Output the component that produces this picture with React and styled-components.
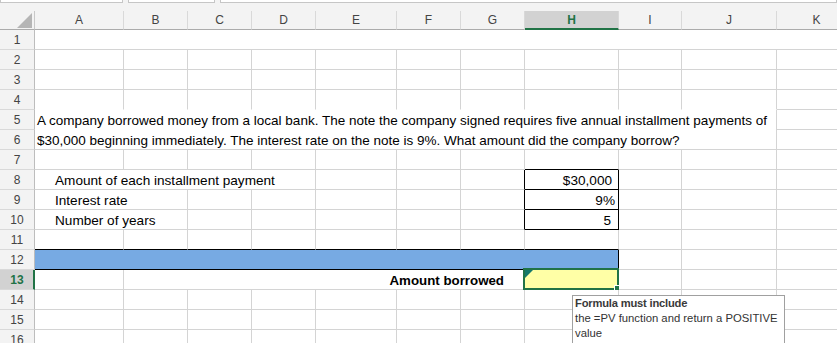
import React from "react";
import styled, { createGlobalStyle } from "styled-components";

const GRID = "#d4d4d4";
const BLACK = "#000";
const BLUE = "#77aae3";
const YELLOW = "#ffffa6";
const GREEN = "#217346";

const GlobalStyle = createGlobalStyle`
  html, body {
    margin: 0;
    padding: 0;
    background: #fff;
    overflow: hidden;
  }
  body {
    font-family: "Liberation Sans", Arial, sans-serif;
  }
`;

const COLS = [
  { name: "A", width: 89 },
  { name: "B", width: 64 },
  { name: "C", width: 64 },
  { name: "D", width: 64 },
  { name: "E", width: 81 },
  { name: "F", width: 64 },
  { name: "G", width: 64 },
  { name: "H", width: 94, active: true },
  { name: "I", width: 63 },
  { name: "J", width: 95 },
  { name: "K", width: 80 },
];

const Page = styled.div`
  position: relative;
  width: 837px;
  height: 343px;
  overflow: hidden;
  background: #f3f3f3;
`;

const TopBar = styled.div`
  height: 11px;
  background: #f3f3f3;
`;

const Strip = styled.div`
  display: flex;
  gap: 5px;
  height: 3px;
`;

const StripBox = styled.div`
  box-sizing: border-box;
  width: ${(p) => (p.$w ? `${p.$w}px` : "auto")};
  flex: ${(p) => (p.$w ? "none" : 1)};
  background: #fff;
  border: 1px solid #c6c6c6;
  border-top: none;
`;

const Sheet = styled.div`
  display: grid;
  grid-template-columns: 35px ${COLS.map((c) => `${c.width}px`).join(" ")};
  grid-template-rows: 19px repeat(16, 20px);
  background: #fff;
`;

const Corner = styled.div`
  grid-column: 1;
  grid-row: 1;
  box-sizing: border-box;
  background: #f3f3f3;
  border-right: 1px solid #c8c8c8;
  border-bottom: 1px solid #ababab;
  display: flex;
  align-items: flex-end;
  justify-content: flex-end;
  padding: 0 2px 1px 0;
`;

const CornerMark = styled.div`
  width: 0;
  height: 0;
  border-left: 15px solid transparent;
  border-bottom: 15px solid #b5b5b5;
`;

const ColHead = styled.div`
  grid-row: 1;
  box-sizing: border-box;
  background: ${(p) => (p.$active ? "#d2d2d2" : "#f3f3f3")};
  border-right: 1px solid #d9d9d9;
  border-bottom: ${(p) => (p.$active ? `2px solid ${GREEN}` : "1px solid #ababab")};
  color: ${(p) => (p.$active ? GREEN : "#444")};
  font-weight: ${(p) => (p.$active ? 700 : 400)};
  font-size: 12px;
  display: flex;
  align-items: center;
  justify-content: center;
  padding-top: ${(p) => (p.$active ? "1px" : "0")};
`;

const RowHead = styled.div`
  grid-column: 1;
  grid-row: ${(p) => p.$row + 1};
  box-sizing: border-box;
  background: ${(p) => (p.$active ? "#d2d2d2" : "#f3f3f3")};
  border-right: ${(p) => (p.$active ? `2px solid ${GREEN}` : "1px solid #bdbdbd")};
  border-bottom: 1px solid #d9d9d9;
  color: ${(p) => (p.$active ? GREEN : "#444")};
  font-weight: ${(p) => (p.$active ? 700 : 400)};
  font-size: 12px;
  display: flex;
  align-items: center;
  justify-content: center;
  padding-left: ${(p) => (p.$active ? "1px" : "0")};
`;

const Cell = styled.div`
  grid-column: ${(p) => p.$col + 2} / span ${(p) => p.$span || 1};
  grid-row: ${(p) => p.$row + 1} / span ${(p) => p.$rows || 1};
  position: relative;
  box-sizing: border-box;
  min-width: 0;
  background: ${(p) => p.$bg || "#fff"};
  border-right: 1px solid ${(p) => p.$right || GRID};
  border-bottom: 1px solid ${(p) => p.$bottom || GRID};
  display: flex;
  flex-direction: ${(p) => (p.$stack ? "column" : "row")};
  align-items: ${(p) => (p.$stack ? "stretch" : "flex-end")};
  justify-content: ${(p) => (p.$align === "right" ? "flex-end" : "flex-start")};
  padding: 0 ${(p) => p.$pr ?? 2}px 0 ${(p) => p.$pl ?? 2}px;
  font-size: ${(p) => p.$size || 13.6}px;
  line-height: 16px;
  font-weight: ${(p) => (p.$bold ? 700 : 400)};
  color: #000;
  white-space: nowrap;
`;

const TextLine = styled.div`
  height: ${(p) => p.$h}px;
  display: flex;
  align-items: flex-end;
`;

const Selection = styled.div`
  position: absolute;
  left: -2px;
  top: -2px;
  width: 96px;
  height: 22px;
  box-sizing: border-box;
  border: 2px solid ${GREEN};
  pointer-events: none;
`;

const FillHandle = styled.div`
  position: absolute;
  right: -4px;
  bottom: -4px;
  width: 5px;
  height: 5px;
  background: ${GREEN};
  border: 1px solid #fff;
`;

const ErrorMark = styled.div`
  position: absolute;
  left: 0;
  top: 0;
  width: 0;
  height: 0;
  border-top: 8px solid #14786a;
  border-right: 8px solid transparent;
`;

const Tip = styled.div`
  position: absolute;
  left: 572px;
  top: 295px;
  width: 213px;
  height: 60px;
  box-sizing: border-box;
  background: #fff;
  border: 1px solid #a0a0a0;
  padding: 0 2px;
  font-family: "Liberation Sans", Arial, sans-serif;
  font-size: 11.3px;
  line-height: 15px;
  color: #333;
  white-space: nowrap;
`;

const TipTitle = styled.div`
  font-weight: 700;
  font-size: 11.2px;
  letter-spacing: -0.2px;
  color: #3a3a3a;
`;

// one grid row: segments are merged / special cells, the rest are plain
function buildRow(r, segs = [], colProps = {}) {
  const out = [];
  let c = 0;
  while (c < COLS.length) {
    const seg = segs.find((s) => s.c === c);
    if (seg) {
      if (!seg.skip) out.push({ ...seg, r });
      c += seg.span || 1;
    } else {
      out.push({ c, r, ...(colProps[c] || {}) });
      c += 1;
    }
  }
  return out;
}

const range = (from, to, props) => {
  const o = {};
  for (let i = from; i <= to; i++) o[i] = props;
  return o;
};

const boxed = { right: BLACK, bottom: BLACK, align: "right" };

const CELLS = [
  ...buildRow(1, [{ c: 0, span: 11 }]),
  ...buildRow(2),
  ...buildRow(3),
  ...buildRow(4, [], range(0, 9, { bottom: "#fff" })),
  ...buildRow(5, [
    {
      c: 0,
      span: 10,
      rows: 2,
      stack: true,
      size: 13.5,
      lines: [
        "A company borrowed money from a local bank. The note the company signed requires five annual installment payments of",
        "$30,000 beginning immediately. The interest rate on the note is 9%. What amount did the company borrow?",
      ],
    },
  ]),
  ...buildRow(6, [{ c: 0, span: 10, skip: true }]),
  ...buildRow(7, [], { 7: { bottom: BLACK } }),
  ...buildRow(8, [{ c: 0, span: 4, pl: 20, text: "Amount of each installment payment" }], {
    6: { right: BLACK },
    7: { ...boxed, pr: 6, text: "$30,000" },
  }),
  ...buildRow(9, [{ c: 0, span: 2, pl: 20, text: "Interest rate" }], {
    6: { right: BLACK },
    7: { ...boxed, pr: 3, text: "9%" },
  }),
  ...buildRow(10, [{ c: 0, span: 2, pl: 20, text: "Number of years" }], {
    6: { right: BLACK },
    7: { ...boxed, pr: 7, text: "5" },
  }),
  ...buildRow(11, [], range(0, 7, { bottom: BLACK })),
  ...buildRow(12, [{ c: 0, span: 8, bg: BLUE, right: BLACK, bottom: BLACK }]),
  ...buildRow(13, [{ c: 1, span: 6, align: "right", bold: true, pr: 20, size: 13.3, text: "Amount borrowed" }], {
    7: { bg: YELLOW, selected: true },
  }),
  ...buildRow(14),
  ...buildRow(15),
  ...buildRow(16),
];

const App = () => {
  return (
    <>
      <GlobalStyle />
      <Page>
        <TopBar>
          <Strip>
            <StripBox $w={123} />
            <StripBox $w={87} />
            <StripBox />
          </Strip>
        </TopBar>
        <Sheet>
          <Corner>
            <CornerMark />
          </Corner>
          {COLS.map((col) => (
            <ColHead key={col.name} $active={col.active}>
              {col.name}
            </ColHead>
          ))}
          {Array.from({ length: 16 }, (_, i) => (
            <RowHead key={i} $row={i + 1} $active={i + 1 === 13}>
              {i + 1}
            </RowHead>
          ))}
          {CELLS.map((cell) => (
            <Cell
              key={`${cell.r}-${cell.c}`}
              $row={cell.r}
              $col={cell.c}
              $span={cell.span}
              $rows={cell.rows}
              $bg={cell.bg}
              $right={cell.right}
              $bottom={cell.bottom}
              $align={cell.align}
              $bold={cell.bold}
              $pl={cell.pl}
              $pr={cell.pr}
              $size={cell.size}
              $stack={cell.stack}
            >
              {cell.lines
                ? cell.lines.map((line, i) => (
                    <TextLine key={i} $h={i === 0 ? 19 : 20}>
                      {line}
                    </TextLine>
                  ))
                : cell.text}
              {cell.selected && (
                <>
                  <ErrorMark />
                  <Selection>
                    <FillHandle />
                  </Selection>
                </>
              )}
            </Cell>
          ))}
        </Sheet>
        <Tip>
          <TipTitle>Formula must include</TipTitle>
          <div>the =PV function and return a POSITIVE</div>
          <div>value</div>
        </Tip>
      </Page>
    </>
  );
};

export default App;
